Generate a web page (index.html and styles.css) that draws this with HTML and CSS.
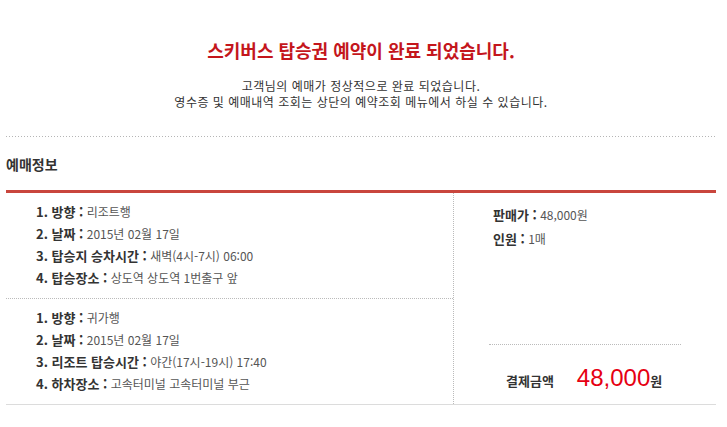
FILE: index.html
```html
<!DOCTYPE html>
<html lang="ko">
<head>
<meta charset="utf-8">
<title>예매 완료</title>
<link rel="stylesheet" href="styles.css">
</head>
<body>
<div class="page">
  <div class="notice">
    <h1 class="title">스키버스 탑승권 예약이 완료 되었습니다.</h1>
    <p class="msg">고객님의 예매가 정상적으로 완료 되었습니다.<br>영수증 및 예매내역 조회는 상단의 예약조회 메뉴에서 하실 수 있습니다.</p>
  </div>
  <div class="sep"></div>
  <h2 class="sec-title">예매정보</h2>
  <div class="info">
    <div class="trips">
      <ul class="trip">
        <li><b class="lbl">1. 방향 :</b> 리조트행</li>
        <li><b class="lbl">2. 날짜 :</b> 2015년 02월 17일</li>
        <li><b class="lbl">3. 탑승지 승차시간 :</b> 새벽(4시-7시) 06:00</li>
        <li><b class="lbl">4. 탑승장소 :</b> 상도역 상도역 1번출구 앞</li>
      </ul>
      <ul class="trip">
        <li><b class="lbl">1. 방향 :</b> 귀가행</li>
        <li><b class="lbl">2. 날짜 :</b> 2015년 02월 17일</li>
        <li><b class="lbl">3. 리조트 탑승시간 :</b> 야간(17시-19시) 17:40</li>
        <li><b class="lbl">4. 하차장소 :</b> 고속터미널 고속터미널 부근</li>
      </ul>
    </div>
    <div class="summary">
      <ul class="price">
        <li><b class="lbl">판매가 :</b> 48,000원</li>
        <li><b class="lbl">인원 :</b> 1매</li>
      </ul>
      <div class="total">
        <span class="total-lbl">결제금액</span>
        <span class="amount">48,000</span><b class="won">원</b>
      </div>
    </div>
  </div>
</div>
</body>
</html>
```
FILE: styles.css
```css
html, body {
  margin: 0;
  padding: 0;
  background: #fff;
}
body {
  font-family: "Noto Sans CJK KR", "Noto Sans", sans-serif;
  font-size: 12px;
  color: #333;
}
.page {
  width: 710px;
  margin: 0 0 0 6px;
}
.notice {
  padding-top: 38px;
  text-align: center;
}
.title {
  margin: 0;
  font-size: 18px;
  line-height: 24px;
  font-weight: bold;
  letter-spacing: 0;
  color: #c4161c;
}
.msg {
  margin: 16px 0 0;
  font-size: 12px;
  line-height: 16px;
  letter-spacing: 0.5px;
  color: #333;
}
.sep {
  margin-top: 26px;
  height: 1px;
  background-image: linear-gradient(to right, #b5b5b5 1px, transparent 1px);
  background-size: 3px 1px;
  background-repeat: repeat-x;
}
.sec-title {
  margin: 17px 0 16px;
  font-size: 14px;
  line-height: 20px;
  font-weight: bold;
  color: #333;
}
.info {
  display: flex;
  border-top: 3px solid #c9463d;
  border-bottom: 1px solid #dcdcdc;
}
.trips {
  flex: 0 0 447px;
}
.trip {
  list-style: none;
  margin: 0;
  padding: 8px 0 9px 30px;
}
.trip + .trip {
  border-top: 1px dotted #bbb;
}
.trip li, .price li {
  line-height: 22px;
  color: #555;
  font-size: 12px;
}
.lbl {
  font-size: 13px;
  font-weight: bold;
  color: #333;
}
.summary {
  flex: 1;
  display: flex;
  flex-direction: column;
  border-left: 1px dotted #bbb;
  padding: 10px 35px 0;
}
.price {
  list-style: none;
  margin: 0;
  padding: 0 0 0 4px;
}
.price li {
  line-height: 24px;
}
.total {
  margin-top: auto;
  border-top: 1px dotted #bbb;
  padding: 20px 0 10px 17px;
  line-height: 26px;
  display: flex;
  align-items: baseline;
}
.total-lbl {
  font-size: 13px;
  font-weight: bold;
  color: #333;
}
.amount {
  margin-left: 23px;
  font-family: "Liberation Sans", Arial, sans-serif;
  font-size: 24px;
  color: #e60012;
}
.won {
  font-size: 13px;
  color: #333;
}
```
